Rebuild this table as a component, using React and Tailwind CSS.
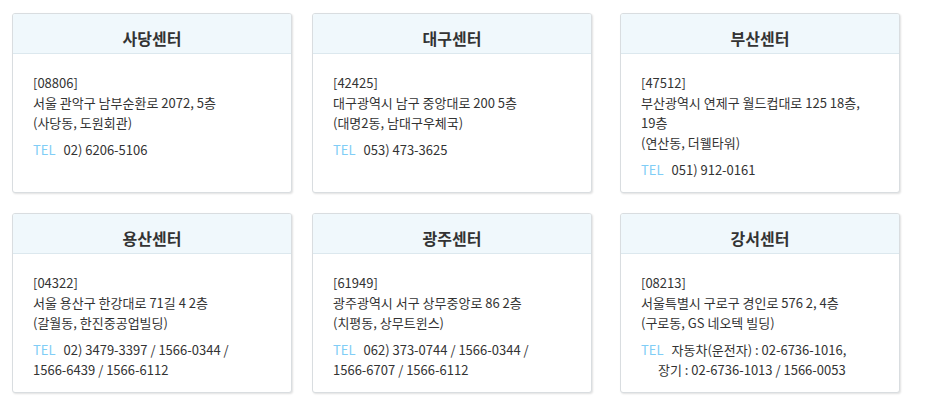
const centers = [
  {
    name: '사당센터',
    zip: '08806',
    addr: ['서울 관악구 남부순환로 2072, 5층', '(사당동, 도원회관)'],
    tel: ['02) 6206-5106'],
  },
  {
    name: '대구센터',
    zip: '42425',
    addr: ['대구광역시 남구 중앙대로 200 5층', '(대명2동, 남대구우체국)'],
    tel: ['053) 473-3625'],
  },
  {
    name: '부산센터',
    zip: '47512',
    addr: ['부산광역시 연제구 월드컵대로 125 18층,', '19층', '(연산동, 더웰타워)'],
    tel: ['051) 912-0161'],
  },
  {
    name: '용산센터',
    zip: '04322',
    addr: ['서울 용산구 한강대로 71길 4 2층', '(갈월동, 한진중공업빌딩)'],
    tel: ['02) 3479-3397 / 1566-0344 /', '1566-6439 / 1566-6112'],
    wrapTel: true,
  },
  {
    name: '광주센터',
    zip: '61949',
    addr: ['광주광역시 서구 상무중앙로 86 2층', '(치평동, 상무트윈스)'],
    tel: ['062) 373-0744 / 1566-0344 /', '1566-6707 / 1566-6112'],
    wrapTel: true,
  },
  {
    name: '강서센터',
    zip: '08213',
    addr: ['서울특별시 구로구 경인로 576 2, 4층', '(구로동, GS 네오텍 빌딩)'],
    tel: ['자동차(운전자) : 02-6736-1016,', '장기 : 02-6736-1013 / 1566-0053'],
  },
];

function CenterCard({ center, className }) {
  return (
    <div
      className={`w-[280px] h-[180px] bg-white border border-[#d9dde0] rounded-[3px] shadow-[1px_1px_2px_rgba(0,0,0,0.12)] overflow-hidden ${className}`}
    >
      <div className="h-[40px] bg-[#f0f8fc] border-b border-[#dce8ee] flex items-center justify-center pt-[9px]">
        <h3 className="text-[16px] font-semibold text-[#333]">{center.name}</h3>
      </div>
      <div className="pl-[20px] pr-[10px] pt-[19px] text-[13px] leading-[20px] text-[#333]">
        <p>[{center.zip}]</p>
        {center.addr.map((line, i) => (
          <p key={i}>{line}</p>
        ))}
        <div className="mt-[7px]">
          {center.tel.map((line, i) => (
            <p key={i} className={i > 0 && !center.wrapTel ? 'pl-[17px]' : ''}>
              {i === 0 && <span className="text-[#80cdf6] mr-[8px]">TEL</span>}
              {line}
            </p>
          ))}
        </div>
      </div>
    </div>
  );
}

export default function App() {
  return (
    <div className="w-[927px] h-[398px] bg-white pt-[13px] font-['Malgun_Gothic','Noto_Sans_CJK_KR',sans-serif]">
      <div className="flex pl-[12px]">
        <CenterCard center={centers[0]} />
        <CenterCard center={centers[1]} className="ml-[20px]" />
        <CenterCard center={centers[2]} className="ml-[28px]" />
      </div>
      <div className="flex pl-[12px] mt-[20px]">
        <CenterCard center={centers[3]} />
        <CenterCard center={centers[4]} className="ml-[20px]" />
        <CenterCard center={centers[5]} className="ml-[28px]" />
      </div>
    </div>
  );
}
